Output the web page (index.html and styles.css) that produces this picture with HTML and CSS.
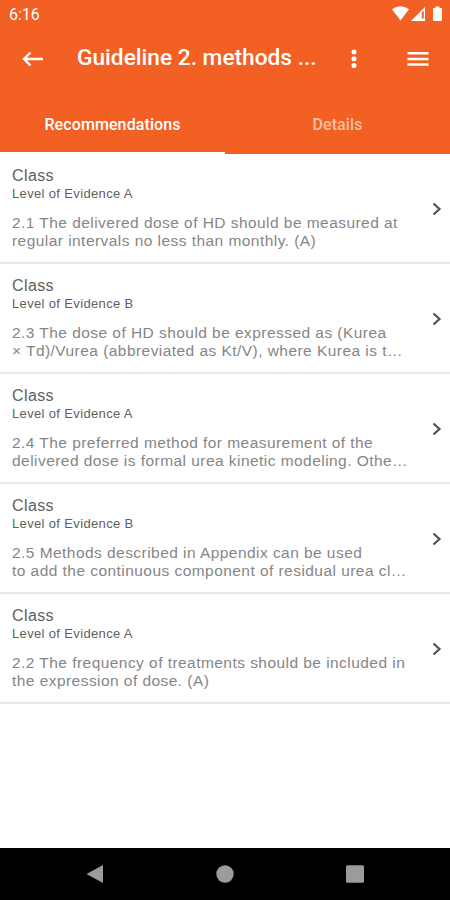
FILE: index.html
```html
<!DOCTYPE html>
<html lang="en">
<head>
    <meta charset="utf-8">
    <title>Guideline 2. methods</title>
    <link rel="stylesheet" href="styles.css">
</head>
<body>
    <header class="header">
        <div class="status-bar">
            <span class="clock">6:16</span>
            <svg class="status-icons" width="50" height="16" viewBox="0 0 50 16" fill="#fff">
                <path d="M0 3.300Q8.500 -2.800 17 3.300L8.500 14.500Z"/>
                <path d="M33 1V15H19Z"/>
                <path d="M29.800 5.500H31.800V12.500H29.800Z" fill="#f26024"/>
                <path d="M43.500 0.500H47.500V2H49.300Q50 2 50 2.700V14.300Q50 15 49.300 15H41.700Q41 15 41 14.300V2.700Q41 2 41.700 2H43.500Z"/>
            </svg>
        </div>

        <div class="toolbar">
            <svg class="back" width="22" height="16" viewBox="0 0 22 16" fill="none" stroke="#fff" stroke-width="2.400">
                <path d="M21 8H2.500M8.500 1.500L2 8L8.500 14.500"/>
            </svg>
            <h1 class="title">Guideline 2. methods ...</h1>
            <svg class="more" width="6" height="20" viewBox="0 0 6 20" fill="#fff">
                <circle cx="3" cy="3" r="2.500"/>
                <circle cx="3" cy="9.800" r="2.500"/>
                <circle cx="3" cy="16.500" r="2.500"/>
            </svg>
            <svg class="menu" width="22" height="16" viewBox="0 0 22 16" stroke="#fff" stroke-width="2.400">
                <path d="M0.500 2.200H21.500M0.500 8H21.500M0.500 13.500H21.500"/>
            </svg>
        </div>

        <nav class="tabs">
            <div class="tab active">Recommendations</div>
            <div class="tab">Details</div>
        </nav>
    </header>

    <!-- Recommendations -->
    <main class="list">
        <div class="item">
            <div class="item-text">
                <p class="class">Class</p>
                <p class="level">Level of Evidence A</p>
                <p class="description">2.1 The delivered dose of HD should be measured at<br>regular intervals no less than monthly. (A)</p>
            </div>
            <svg class="chevron" width="10" height="14" viewBox="0 0 10 14"><path d="M1.500 1.500L7.500 7L1.500 12.500"/></svg>
        </div>
        <div class="item">
            <div class="item-text">
                <p class="class">Class</p>
                <p class="level">Level of Evidence B</p>
                <p class="description">2.3 The dose of HD should be expressed as (Kurea<br>× Td)/Vurea (abbreviated as Kt/V), where Kurea is t…</p>
            </div>
            <svg class="chevron" width="10" height="14" viewBox="0 0 10 14"><path d="M1.500 1.500L7.500 7L1.500 12.500"/></svg>
        </div>
        <div class="item">
            <div class="item-text">
                <p class="class">Class</p>
                <p class="level">Level of Evidence A</p>
                <p class="description">2.4 The preferred method for measurement of the<br>delivered dose is formal urea kinetic modeling. Othe…</p>
            </div>
            <svg class="chevron" width="10" height="14" viewBox="0 0 10 14"><path d="M1.500 1.500L7.500 7L1.500 12.500"/></svg>
        </div>
        <div class="item">
            <div class="item-text">
                <p class="class">Class</p>
                <p class="level">Level of Evidence B</p>
                <p class="description">2.5 Methods described in Appendix can be used<br>to add the continuous component of residual urea cl…</p>
            </div>
            <svg class="chevron" width="10" height="14" viewBox="0 0 10 14"><path d="M1.500 1.500L7.500 7L1.500 12.500"/></svg>
        </div>
        <div class="item">
            <div class="item-text">
                <p class="class">Class</p>
                <p class="level">Level of Evidence A</p>
                <p class="description">2.2 The frequency of treatments should be included in<br>the expression of dose. (A)</p>
            </div>
            <svg class="chevron" width="10" height="14" viewBox="0 0 10 14"><path d="M1.500 1.500L7.500 7L1.500 12.500"/></svg>
        </div>
    </main>

    <!-- Android navigation -->
    <footer class="nav-bar">
        <svg width="18" height="20" viewBox="0 0 18 20"><path d="M17 1V19L0.500 10Z"/></svg>
        <svg width="18" height="20" viewBox="0 0 18 20"><circle cx="9" cy="10" r="8.700"/></svg>
        <svg width="18" height="20" viewBox="0 0 18 20"><rect y="1.200" width="18" height="17.600" rx="1.500"/></svg>
    </footer>
</body>
</html>
```
FILE: styles.css
```css
* {
    box-sizing: border-box;
}

body {
    margin: 0;
    height: 900px;
    display: flex;
    flex-direction: column;
    overflow: hidden;
    background-color: #fff;
    font-family: "Liberation Sans", Arial, sans-serif;
}

.header {
    height: 154px;
    background-color: #f26024;
    color: #fff;
    font-family: Roboto, sans-serif;
}

.status-bar {
    display: flex;
    justify-content: space-between;
    height: 30px;
    padding: 6px 8px 0 9px;
}

.clock {
    font-size: 16px;
    line-height: 18px;
}

.toolbar {
    display: flex;
    align-items: center;
    height: 58px;
    padding: 0 21px 0 22px;
}

.title {
    width: 240px;
    margin: 0 0 3px 33px;
    font-size: 22.7px;
    font-weight: 500;
    line-height: 28px;
    white-space: nowrap;
}

.more {
    margin-left: 34px;
}

.menu {
    margin-left: auto;
}

.tabs {
    display: flex;
    height: 66px;
}

.tab {
    flex: 1;
    padding-top: 27px;
    border-bottom: 2px solid #f26024;
    font-size: 16px;
    font-weight: 500;
    line-height: 20px;
    letter-spacing: 0.1px;
    text-align: center;
    color: #fac0a9;
}

.tab.active {
    border-color: #fff;
    color: #fff;
}

.list {
    flex: 1;
}

.item {
    display: flex;
    justify-content: space-between;
    height: 110px;
    padding: 12px 8px 0 12px;
    border-bottom: 2px solid #e8e8e8;
}

.item p {
    margin: 0;
    white-space: nowrap;
}

.item .class {
    font-size: 16px;
    line-height: 19px;
    letter-spacing: 0.4px;
    color: #606060;
}

.item .level {
    font-size: 13px;
    line-height: 17px;
    letter-spacing: 0.35px;
    color: #606060;
}

.item .description {
    margin-top: 12px;
    font-size: 15.5px;
    line-height: 18.3px;
    letter-spacing: 0.45px;
    color: #868686;
}

.chevron {
    margin-top: 36px;
    fill: none;
    stroke: #505050;
    stroke-width: 2.2;
}

.nav-bar {
    display: flex;
    justify-content: space-between;
    align-items: center;
    height: 52px;
    padding: 0 86px;
    background-color: #000;
    fill: #9b9b9b;
}
```
